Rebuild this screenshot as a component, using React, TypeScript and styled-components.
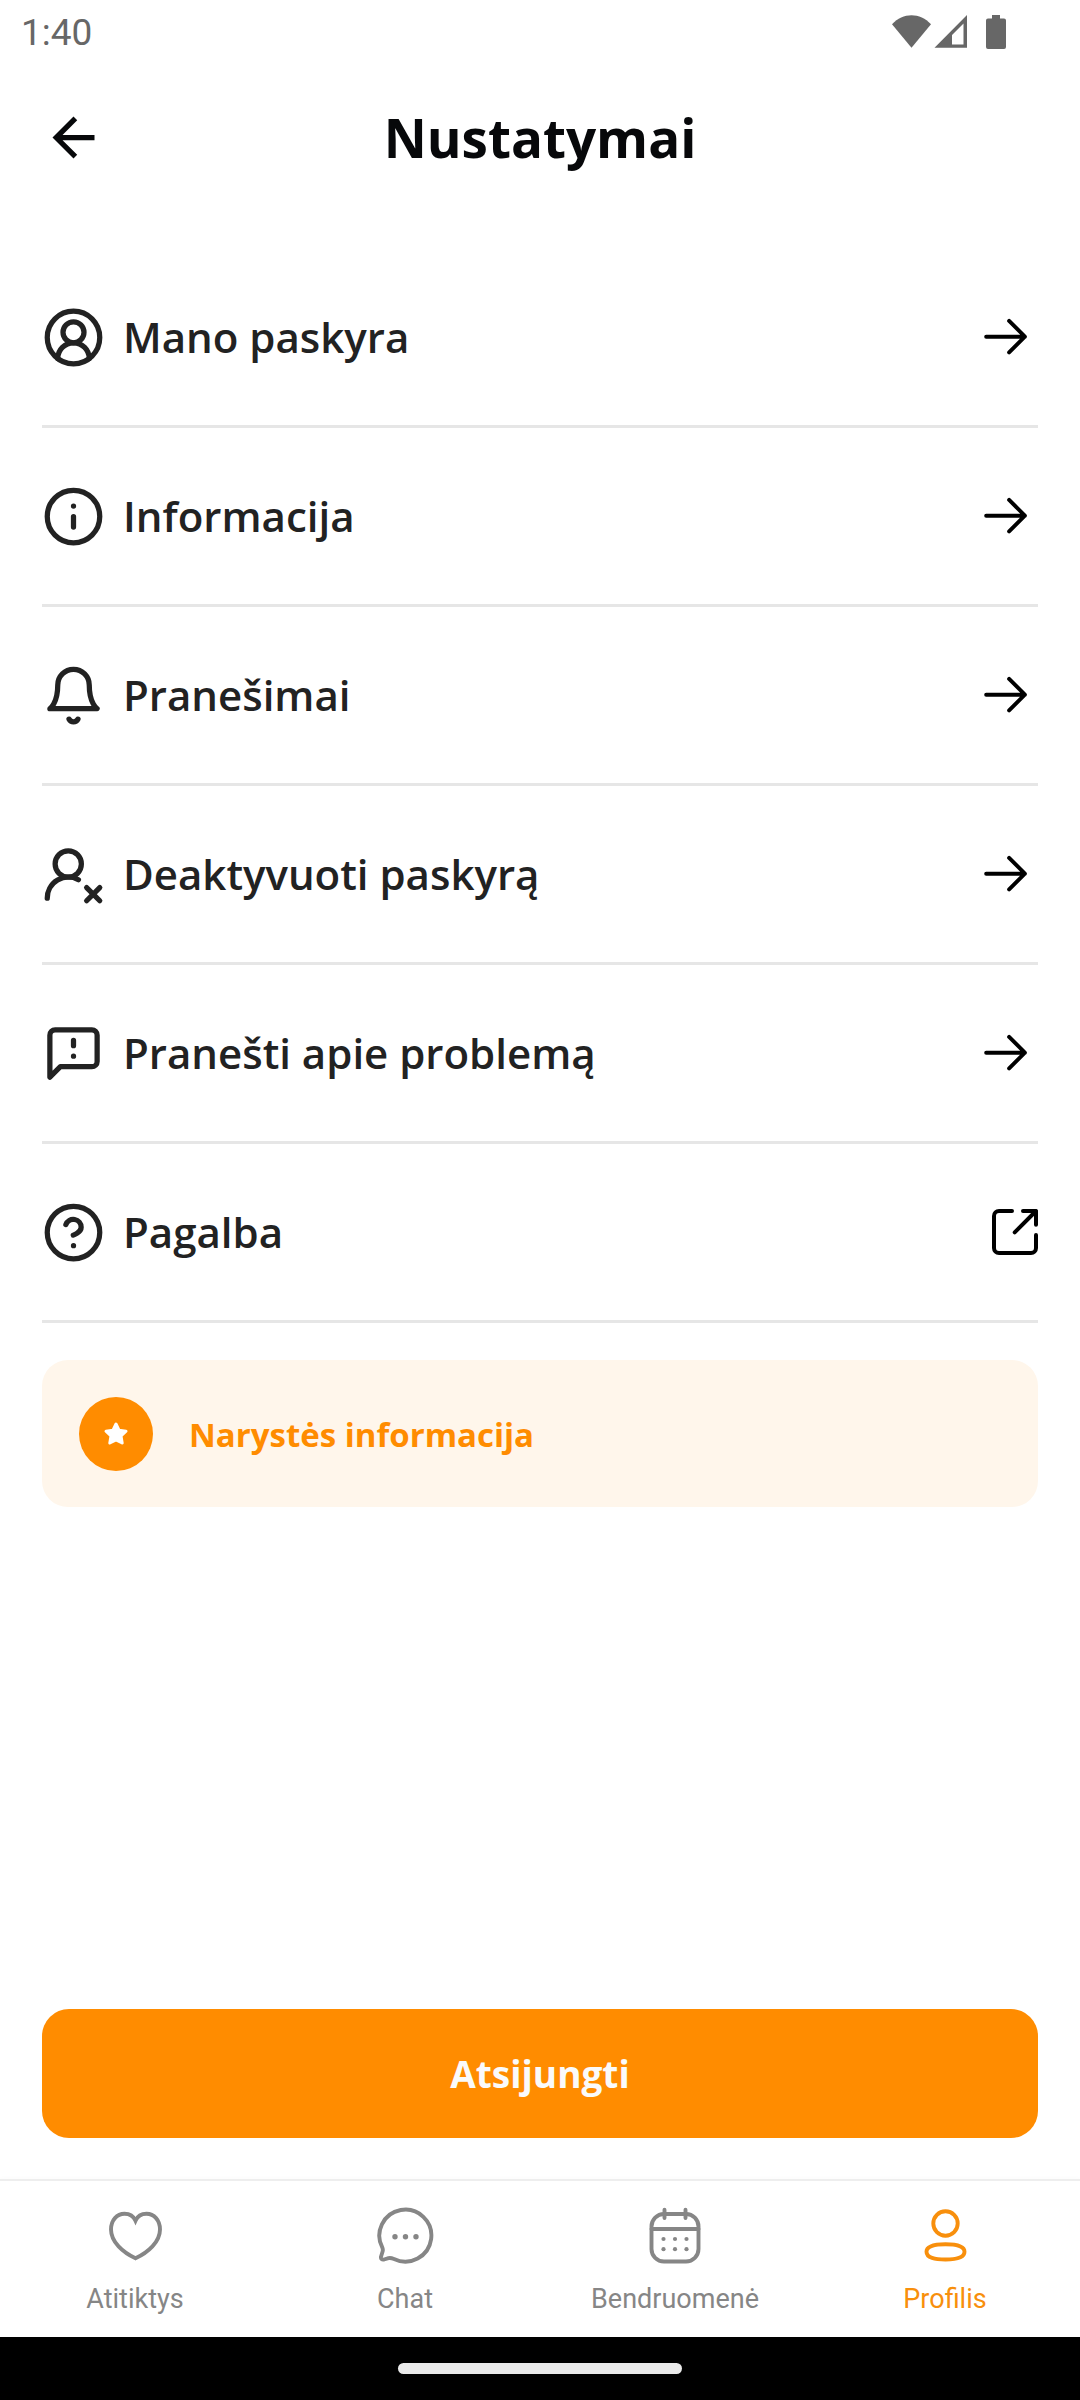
import React from 'react';
import styled, { createGlobalStyle } from 'styled-components';

const color = {
  text: '#222222',
  black: '#07080a',
  accent: '#ff8c00',
  accentSoft: '#fff6eb',
  line: '#e6e6e6',
  muted: '#868686',
  status: '#676767',
};

const GlobalStyle = createGlobalStyle`
  *, *::before, *::after { box-sizing: border-box; }
  body {
    margin: 0;
    background: #fff;
    font-family: 'Open Sans', 'Noto Sans', sans-serif;
    color: ${color.text};
  }
  button {
    border: 0;
    padding: 0;
    background: none;
    font: inherit;
    color: inherit;
    cursor: pointer;
  }
  svg { display: block; flex: none; }
`;

const Screen = styled.div`
  display: flex;
  flex-direction: column;
  min-height: 100vh;
`;

const StatusBar = styled.div`
  display: flex;
  align-items: center;
  justify-content: space-between;
  height: 65px;
  padding: 0 74px 0 21px;
  font-family: Roboto, sans-serif;
  font-size: 37px;
  color: ${color.status};
`;

const Header = styled.header`
  display: grid;
  grid-template-columns: 63px 1fr 63px;
  align-items: center;
  height: 145px;
  padding: 0 42px;
  color: ${color.black};
`;

const Title = styled.h1`
  margin: 0;
  font-size: 53px;
  font-weight: 700;
  line-height: 74px;
  text-align: center;
`;

const Main = styled.main`
  flex: 1;
  display: flex;
  flex-direction: column;
  padding: 39px 42px 41px;
`;

const List = styled.ul`
  list-style: none;
  margin: 0 0 37px;
  padding: 0;
`;

const Item = styled.li`
  border-bottom: 3px solid ${color.line};
`;

const Row = styled.a`
  display: flex;
  align-items: center;
  gap: 18px;
  width: 100%;
  height: 176px;
  color: ${color.text};
  text-decoration: none;
`;

const RowLabel = styled.span`
  flex: 1;
  font-size: 42px;
  font-weight: 600;
  line-height: 58px;
  text-align: left;
`;

const MembershipCard = styled.button`
  display: flex;
  align-items: center;
  gap: 36px;
  padding: 37px 37px 36px;
  border-radius: 26px;
  background: ${color.accentSoft};
  color: ${color.accent};
  font-size: 33px;
  font-weight: 700;
`;

const Badge = styled.span`
  display: grid;
  place-items: center;
  width: 74px;
  height: 74px;
  border-radius: 50%;
  background: ${color.accent};
`;

const LogoutButton = styled.button`
  height: 129px;
  margin-top: auto;
  border-radius: 27px;
  background: ${color.accent};
  color: #fafafa;
  font-size: 37px;
  font-weight: 700;
`;

const TabBar = styled.nav`
  display: grid;
  grid-template-columns: repeat(4, 1fr);
  border-top: 2px solid #eeeeee;
  box-shadow: 0 -1px 4px rgba(0, 0, 0, 0.02);
`;

const Tab = styled.a<{ $active?: boolean }>`
  display: flex;
  flex-direction: column;
  align-items: center;
  gap: 16px;
  padding: 23px 0 22px;
  color: ${(p) => (p.$active ? '#f88f0c' : color.muted)};
  font-family: Roboto, sans-serif;
  font-size: 27px;
  line-height: 32px;
  text-decoration: none;
`;

const GestureBar = styled.div`
  display: grid;
  place-items: center;
  height: 63px;
  background: #000;
`;

const GesturePill = styled.div`
  width: 284px;
  height: 11px;
  border-radius: 6px;
  background: #eaeaea;
`;

const LineIcon = ({ children }: { children: React.ReactNode }) => (
  <svg width="63" height="63" viewBox="0 0 24 24" fill="none" stroke="currentColor" strokeWidth="2" strokeLinecap="round" strokeLinejoin="round" aria-hidden="true">
    {children}
  </svg>
);

const TabIcon = ({ children }: { children: React.ReactNode }) => (
  <svg width="63" height="63" viewBox="0 0 63 63" fill="none" stroke="currentColor" strokeWidth="3.9" strokeLinecap="round" strokeLinejoin="round" aria-hidden="true">
    {children}
  </svg>
);

const ArrowIcon = () => (
  <svg width="63" height="63" viewBox="0 0 24 24" fill="none" stroke="#000" strokeWidth="1.5" strokeLinecap="round" strokeLinejoin="round" aria-hidden="true">
    <path d="M4.25 11.700H19M13 5.700l6 6-6 6" />
  </svg>
);

const ExternalIcon = () => (
  <svg width="46" height="46" viewBox="0 0 46 46" fill="none" stroke="#000" strokeWidth="4" strokeLinecap="round" strokeLinejoin="round" aria-hidden="true">
    <path d="M20 2H7a5 5 0 0 0-5 5v32a5 5 0 0 0 5 5h32a5 5 0 0 0 5-5V26" />
    <path d="M31 2h13v13.700M44 2 22.700 23.300" />
  </svg>
);

const items = [
  {
    label: 'Mano paskyra',
    href: '#paskyra',
    icon: (
      <>
        <path d="M18 20a6 6 0 0 0-12 0" />
        <circle cx="12" cy="10" r="4" />
        <circle cx="12" cy="12" r="10" />
      </>
    ),
  },
  {
    label: 'Informacija',
    href: '#informacija',
    icon: (
      <>
        <circle cx="12" cy="12" r="10" />
        <path d="M12 16v-4M12 8h.01" />
      </>
    ),
  },
  {
    label: 'Pranešimai',
    href: '#pranesimai',
    icon: (
      <>
        <path d="M6 8a6 6 0 0 1 12 0c0 7 3 9 3 9H3s3-2 3-9" />
        <path d="M10.3 21a1.94 1.94 0 0 0 3.4 0" />
      </>
    ),
  },
  {
    label: 'Deaktyvuoti paskyrą',
    href: '#deaktyvuoti',
    icon: (
      <>
        <path d="M2 21a8 8 0 0 1 11.873-7" />
        <circle cx="10" cy="8" r="5" />
        <path d="m17 17 5 5M22 17l-5 5" />
      </>
    ),
  },
  {
    label: 'Pranešti apie problemą',
    href: '#problema',
    icon: (
      <>
        <path d="M21 15a2 2 0 0 1-2 2H7l-4 4V5a2 2 0 0 1 2-2h14a2 2 0 0 1 2 2z" />
        <path d="M12 7v2M12 13h.01" />
      </>
    ),
  },
  {
    label: 'Pagalba',
    href: '#pagalba',
    external: true,
    icon: (
      <>
        <circle cx="12" cy="12" r="10" />
        <path d="M9.09 9a3 3 0 0 1 5.83 1c0 2-3 3-3 3M12 17h.01" />
      </>
    ),
  },
];

const tabs = [
  {
    label: 'Atitiktys',
    icon: (
      <path d="M31.5 54.3C19 48.5 7 38 7 25.5 7 16 13 9.8 20.5 9.8c5 0 9 2.4 11 6.9 2-4.5 6-6.9 11-6.9C50 9.8 56 16 56 25.5c0 12.500-12 23-24.500 28.800Z" strokeLinejoin="miter" />
    ),
  },
  {
    label: 'Chat',
    icon: (
      <>
        <path d="M8.500 44A26 26 0 1 1 20 55c-2-.8-3.500-1.300-5.500-.8l-4.500 1.300c-2 .5-3.400-.7-3-2.800l1.600-5.200c.4-1.300.3-2.300-.1-3.500Z" />
        <g fill="currentColor" stroke="none">
          <circle cx="21" cy="32.800" r="2.700" />
          <circle cx="31.500" cy="32.800" r="2.700" />
          <circle cx="42" cy="32.800" r="2.700" />
        </g>
      </>
    ),
  },
  {
    label: 'Bendruomenė',
    icon: (
      <>
        <rect x="7.500" y="10" width="47" height="47.500" rx="12.500" />
        <path d="M20.500 5.800V14M41.500 5.800V14M7.500 25h47" />
        <g fill="currentColor" stroke="none">
          <circle cx="19.500" cy="35" r="2.100" />
          <circle cx="31" cy="35" r="2.100" />
          <circle cx="42.500" cy="35" r="2.100" />
          <circle cx="19.500" cy="45.200" r="2.100" />
          <circle cx="31" cy="45.200" r="2.100" />
          <circle cx="42.500" cy="45.200" r="2.100" />
        </g>
      </>
    ),
  },
  {
    label: 'Profilis',
    active: true,
    icon: (
      <>
        <circle cx="31.500" cy="19.500" r="12.200" />
        <path d="M12.500 47.800C12.500 41.500 21 40.200 31.500 40.200S50.500 41.500 50.500 47.800 42 55.500 31.500 55.500 12.500 54.100 12.500 47.800Z" />
      </>
    ),
  },
];

export default function App() {
  return (
    <Screen>
      <GlobalStyle />
      <StatusBar>
        <span>1:40</span>
        <svg width="114" height="36" viewBox="0 0 114 36" fill="currentColor" aria-hidden="true">
          <path d="M0 9.300C11-2.700 28-2.700 39 9.300L19.500 32.700Z" />
          <path fillRule="evenodd" d="M42.500 32.700H75V0ZM60 29.500V20L71.500 8.500v21Z" />
          <path d="M100 0h8v3.500h4a2 2 0 0 1 2 2V32a2 2 0 0 1-2 2H96a2 2 0 0 1-2-2V5.500a2 2 0 0 1 2-2h4Z" />
        </svg>
      </StatusBar>

      <Header>
        <button type="button" aria-label="Atgal">
          <svg width="63" height="63" viewBox="0 0 24 24" fill="currentColor" aria-hidden="true">
            <path d="M20 11H7.830l5.590-5.590L12 4l-8 8 8 8 1.410-1.410L7.830 13H20v-2z" />
          </svg>
        </button>
        <Title>Nustatymai</Title>
      </Header>

      <Main>
        <List>
          {items.map((item) => (
            <Item key={item.label}>
              <Row href={item.href}>
                <LineIcon>{item.icon}</LineIcon>
                <RowLabel>{item.label}</RowLabel>
                {item.external ? <ExternalIcon /> : <ArrowIcon />}
              </Row>
            </Item>
          ))}
        </List>

        <MembershipCard type="button">
          <Badge>
            <svg width="26" height="26" viewBox="0 0 26 26" fill="#fff" stroke="#fff" strokeWidth="3" strokeLinejoin="round" aria-hidden="true">
              <path d="M13 3l3 6.200 7 1-5 4.800 1.200 7L13 18.800 6.800 22 8 15l-5-4.800 7-1Z" />
            </svg>
          </Badge>
          <span>Narystės informacija</span>
        </MembershipCard>

        <LogoutButton type="button">Atsijungti</LogoutButton>
      </Main>

      <TabBar>
        {tabs.map((tab) => (
          <Tab key={tab.label} href={'#' + tab.label.toLowerCase()} $active={tab.active} aria-current={tab.active ? 'page' : undefined}>
            <TabIcon>{tab.icon}</TabIcon>
            <span>{tab.label}</span>
          </Tab>
        ))}
      </TabBar>
      <GestureBar>
        <GesturePill />
      </GestureBar>
    </Screen>
  );
}
